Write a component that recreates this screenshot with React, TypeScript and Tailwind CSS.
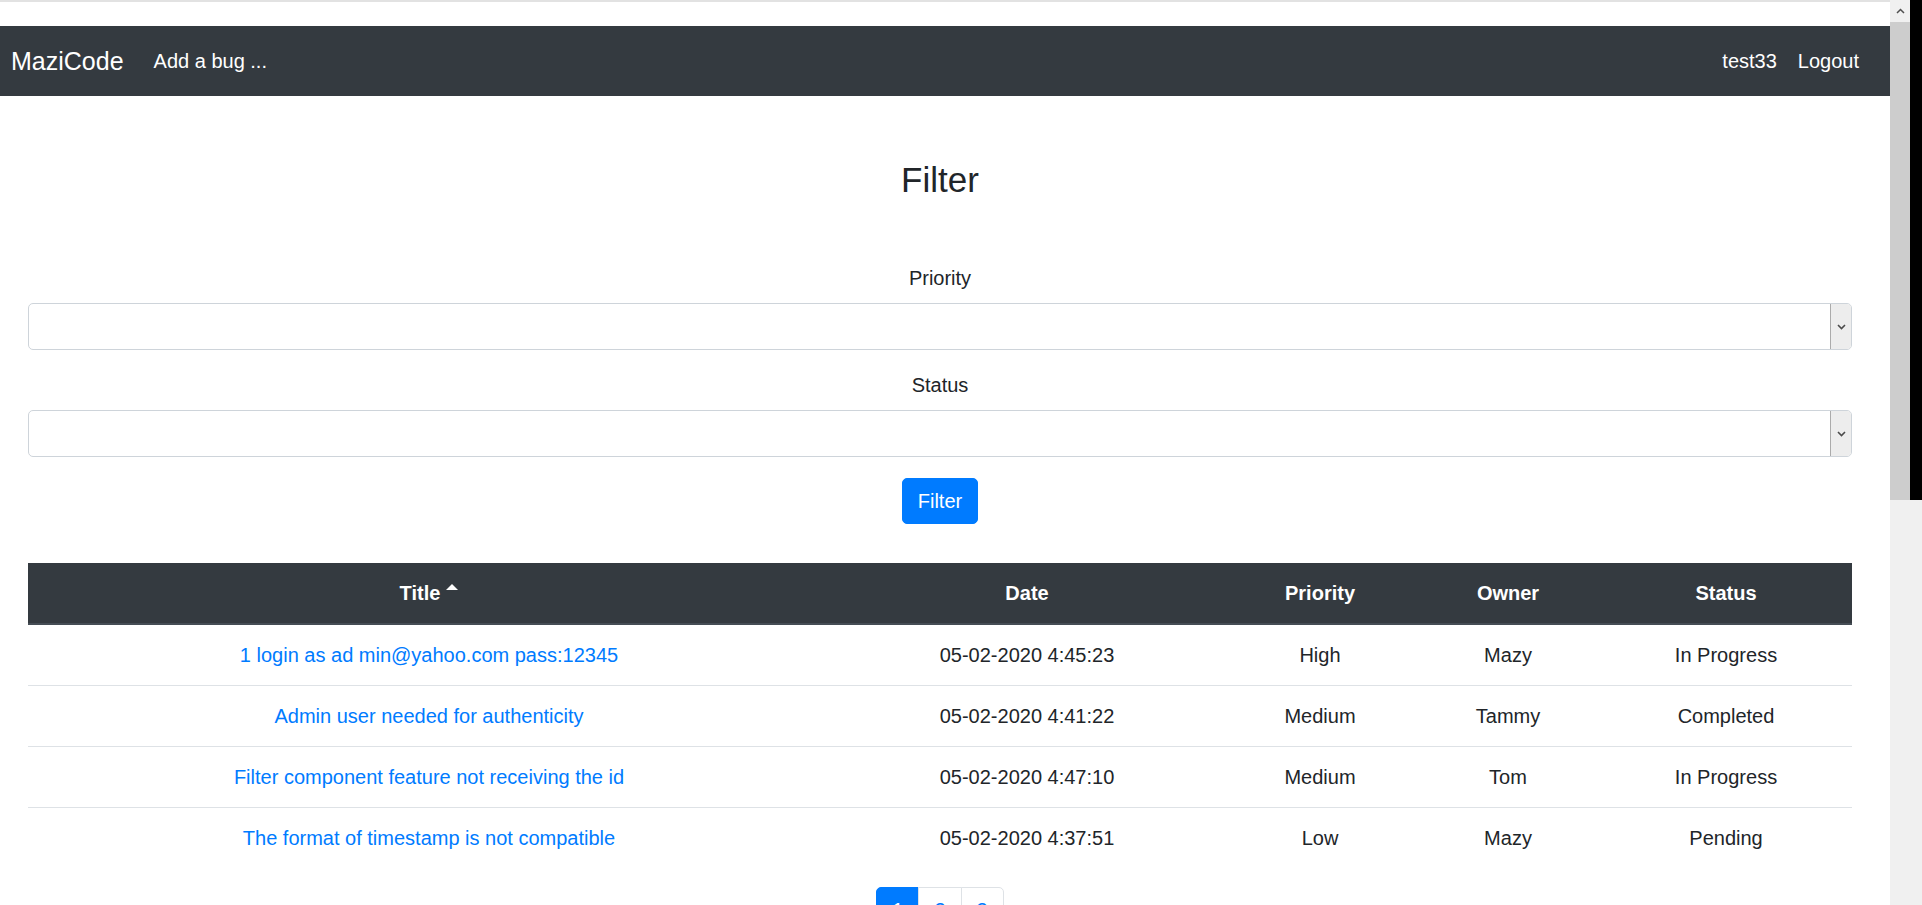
import React from "react";

const bugs = [
  { title: "1 login as ad min@yahoo.com pass:12345", date: "05-02-2020 4:45:23", priority: "High", owner: "Mazy", status: "In Progress" },
  { title: "Admin user needed for authenticity", date: "05-02-2020 4:41:22", priority: "Medium", owner: "Tammy", status: "Completed" },
  { title: "Filter component feature not receiving the id", date: "05-02-2020 4:47:10", priority: "Medium", owner: "Tom", status: "In Progress" },
  { title: "The format of timestamp is not compatible", date: "05-02-2020 4:37:51", priority: "Low", owner: "Mazy", status: "Pending" },
];

function FakeSelect() {
  return (
    <div className="flex h-[47px] w-full rounded-[5px] border border-[#ced4da] bg-white">
      <div className="flex-1" />
      <div className="flex w-[21px] items-center justify-center rounded-r-[4px] border-l border-[#ababab] bg-[#ededed]">
        <svg width="9" height="6" viewBox="0 0 9 6">
          <path d="M1 1 L4.5 4.5 L8 1" fill="none" stroke="#4b4b4b" strokeWidth="1.6" />
        </svg>
      </div>
    </div>
  );
}

export default function App() {
  return (
    <div className="flex h-[905px] w-[1922px] overflow-hidden bg-white font-['Liberation_Sans',Arial,sans-serif] text-[#212529]">
      <div className="w-[1890px] shrink-0">
        {/* top strip */}
        <div className="h-[26px] border-t-2 border-[#e2e2e2]" />

        {/* Navbar */}
        <nav className="flex h-[70px] items-center bg-[#343a40] pl-[11px] pr-[31px] text-white">
          <span className="text-[25px] leading-[37px]">MaziCode</span>
          <span className="ml-[30px] text-[20px] leading-[30px]">Add a bug ...</span>
          <div className="ml-auto flex gap-[21px] text-[20px] leading-[30px]">
            <span>test33</span>
            <span>Logout</span>
          </div>
        </nav>

        <main className="w-[1824px] pl-[28px] box-content">
          <h3 className="pt-[63px] text-center text-[35px] font-normal leading-[42px]">Filter</h3>

          <div className="mt-[62px] text-center text-[20px] leading-[30px]">Priority</div>
          <div className="mt-[10px]">
            <FakeSelect />
          </div>

          <div className="mt-[20px] text-center text-[20px] leading-[30px]">Status</div>
          <div className="mt-[10px]">
            <FakeSelect />
          </div>

          <div className="mt-[21px] flex justify-center">
            <button className="rounded-[5px] border border-[#007bff] bg-[#007bff] px-[15px] py-[7px] text-[20px] leading-[30px] text-white">
              Filter
            </button>
          </div>

          {/* Bugs table */}
          <table className="mt-[39px] w-full table-fixed text-center text-[20px] leading-[30px]">
            <colgroup>
              <col className="w-[802px]" />
              <col className="w-[394px]" />
              <col className="w-[192px]" />
              <col className="w-[184px]" />
              <col />
            </colgroup>
            <thead>
              <tr className="bg-[#343a40] text-white">
                <th className="border-b-2 border-[#454d55] py-[15px] font-bold">
                  Title
                  <span className="ml-[6px] inline-block h-0 w-0 -translate-y-[8px] border-x-[6px] border-b-[6px] border-x-transparent border-b-white align-middle" />
                </th>
                <th className="border-b-2 border-[#454d55] py-[15px] font-bold">Date</th>
                <th className="border-b-2 border-[#454d55] py-[15px] font-bold">Priority</th>
                <th className="border-b-2 border-[#454d55] py-[15px] font-bold">Owner</th>
                <th className="border-b-2 border-[#454d55] py-[15px] font-bold">Status</th>
              </tr>
            </thead>
            <tbody>
              {bugs.map((b) => (
                <tr key={b.title}>
                  <td className="border-t border-[#dee2e6] py-[15px] text-[#007bff]">{b.title}</td>
                  <td className="border-t border-[#dee2e6] py-[15px]">{b.date}</td>
                  <td className="border-t border-[#dee2e6] py-[15px]">{b.priority}</td>
                  <td className="border-t border-[#dee2e6] py-[15px]">{b.owner}</td>
                  <td className="border-t border-[#dee2e6] py-[15px]">{b.status}</td>
                </tr>
              ))}
            </tbody>
          </table>

          {/* Pagination */}
          <div className="mt-[19px] flex justify-center text-[20px] leading-[25px]">
            <span className="rounded-l-[5px] border border-[#007bff] bg-[#007bff] px-[15px] py-[10px] text-white">1</span>
            <span className="-ml-px border border-[#dee2e6] bg-white px-[15px] py-[10px] text-[#007bff]">2</span>
            <span className="-ml-px rounded-r-[5px] border border-[#dee2e6] bg-white px-[15px] py-[10px] text-[#007bff]">3</span>
          </div>
        </main>
      </div>

      {/* window scrollbar */}
      <div className="flex w-[32px] shrink-0 flex-col bg-[#f0f0f0]">
        <div className="flex h-[500px] shrink-0">
          <div className="flex w-[20px] flex-col">
            <div className="flex h-[22px] shrink-0 items-center justify-center bg-[#f0f0f0]">
              <svg width="9" height="6" viewBox="0 0 9 6">
                <path d="M1 5 L4.5 1.5 L8 5" fill="none" stroke="#505050" strokeWidth="1.5" />
              </svg>
            </div>
            <div className="flex-1 bg-[#cdcdcd]" />
          </div>
          <div className="w-[12px] bg-black" />
        </div>
      </div>
    </div>
  );
}
